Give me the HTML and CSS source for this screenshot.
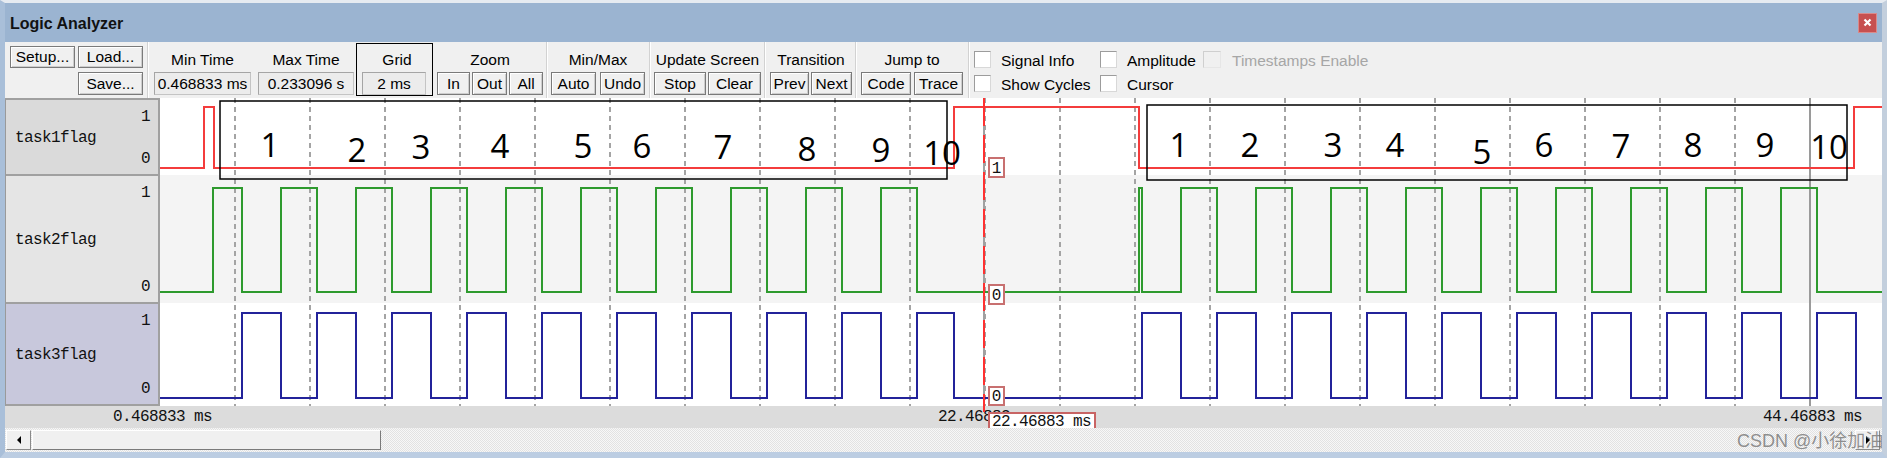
FILE: index.html
```html
<!DOCTYPE html>
<html>
<head>
<meta charset="utf-8">
<title>Logic Analyzer</title>
<link rel="stylesheet" href="styles.css">
</head>
<body>
<div class="window">
  <div class="titlebar">
    <div class="title">Logic Analyzer</div>
    <div class="close"><svg width="9" height="9" viewBox="0 0 9 9"><path class="xmark" d="M1.5 1.5L7.5 7.5M7.5 1.5L1.5 7.5"/></svg></div>
  </div>

  <div class="toolbar">
    <div class="files">
      <div class="r1"><div class="btn w65 h22">Setup...</div><div class="btn w65 h22">Load...</div></div>
      <div class="r2"><div class="btn w65">Save...</div></div>
    </div>
    <div class="sep ml4"></div>
    <div class="grp ml5"><div class="lbl">Min Time</div><div class="ctrls"><div class="field w97">0.468833 ms</div></div></div>
    <div class="grp ml7"><div class="lbl">Max Time</div><div class="ctrls"><div class="field w96">0.233096 s</div></div></div>
    <div class="gridbox ml2"><div class="lbl">Grid</div><div class="ctrls"><div class="field w64">2 ms</div></div></div>
    <div class="grp ml4"><div class="lbl">Zoom</div><div class="ctrls g2"><div class="btn w33">In</div><div class="btn w35">Out</div><div class="btn w34">All</div></div></div>
    <div class="sep ml3"></div>
    <div class="grp ml3"><div class="lbl">Min/Max</div><div class="ctrls g4"><div class="btn w45">Auto</div><div class="btn w45">Undo</div></div></div>
    <div class="sep ml4"></div>
    <div class="grp ml3"><div class="lbl">Update Screen</div><div class="ctrls g2"><div class="btn w52">Stop</div><div class="btn w53">Clear</div></div></div>
    <div class="sep ml3"></div>
    <div class="grp ml4"><div class="lbl">Transition</div><div class="ctrls g2"><div class="btn w39">Prev</div><div class="btn w41">Next</div></div></div>
    <div class="sep ml3"></div>
    <div class="grp ml4"><div class="lbl">Jump to</div><div class="ctrls g3"><div class="btn w50">Code</div><div class="btn w49">Trace</div></div></div>
    <div class="sep ml5"></div>
    <div class="checks ml4">
      <div class="cb"></div><div class="ct">Signal Info</div>
      <div class="cb"></div><div class="ct">Amplitude</div>
      <div class="cb dis"></div><div class="ct ct3 distext">Timestamps Enable</div>
      <div class="cb"></div><div class="ct">Show Cycles</div>
      <div class="cb"></div><div class="ct">Cursor</div>
    </div>
  </div>

  <div class="main">
    <div class="names">
      <div class="sig s1"><div class="v">1</div><div class="nm">task1flag</div><div class="v">0</div></div>
      <div class="sig s2"><div class="v">1</div><div class="nm">task2flag</div><div class="v">0</div></div>
      <div class="sig s3"><div class="v">1</div><div class="nm">task3flag</div><div class="v">0</div></div>
    </div>
    <div class="plot">
      <svg class="wave" width="1722" height="308" viewBox="160 98 1722 308">
        <rect class="row-w" x="160" y="98" width="1722" height="77"/>
        <rect class="row-g" x="160" y="175" width="1722" height="128"/>
        <rect class="row-w" x="160" y="303" width="1722" height="103"/>
        <path class="grid" d="M235 98V406M310 98V406M385 98V406M460 98V406M535 98V406M610 98V406M685 98V406M760 98V406M835 98V406M910 98V406M985 98V406M1060 98V406M1135 98V406M1210 98V406M1285 98V406M1360 98V406M1435 98V406M1510 98V406M1585 98V406M1660 98V406M1735 98V406"/>
        <path class="endline" d="M1810 98V406"/>
        <path class="sig-red" d="M160 168H204V107H214V168H954V107H1139V168H1854V107H1882"/>
        <path class="sig-green" d="M160 292H213V188H242V292H281V188H317V292H356V188H392V292H431V188H467V292H506V188H542V292H581V188H617V292H656V188H692V292H731V188H767V292H806V188H842V292H881V188H917V292H1139V188H1142V292H1181V188H1217V292H1256V188H1292V292H1331V188H1367V292H1406V188H1442V292H1481V188H1517V292H1556V188H1592V292H1631V188H1667V292H1706V188H1742V292H1781V188H1817V292H1882"/>
        <path class="sig-blue" d="M160 398H242V313H281V398H317V313H356V398H392V313H431V398H467V313H506V398H542V313H581V398H617V313H656V398H692V313H731V398H767V313H806V398H842V313H881V398H917V313H954V398H1142V313H1181V398H1217V313H1256V398H1292V313H1331V398H1367V313H1406V398H1442V313H1481V398H1517V313H1556V398H1592V313H1631V398H1667V313H1706V398H1742V313H1781V398H1817V313H1856V398H1882"/>
        <rect class="anno" x="220" y="101" width="727" height="78"/>
        <rect class="anno" x="1147" y="105" width="700" height="75"/>
        <text class="dg" x="270" y="157">1</text>
        <text class="dg" x="357" y="162">2</text>
        <text class="dg" x="421" y="159">3</text>
        <text class="dg" x="500" y="158">4</text>
        <text class="dg" x="583" y="158">5</text>
        <text class="dg" x="642" y="158">6</text>
        <text class="dg" x="723" y="159">7</text>
        <text class="dg" x="807" y="161">8</text>
        <text class="dg" x="881" y="162">9</text>
        <text class="dg" x="942" y="165">10</text>
        <text class="dg" x="1179" y="157">1</text>
        <text class="dg" x="1250" y="157">2</text>
        <text class="dg" x="1333" y="157">3</text>
        <text class="dg" x="1395" y="157">4</text>
        <text class="dg" x="1482" y="164">5</text>
        <text class="dg" x="1544" y="157">6</text>
        <text class="dg" x="1621" y="158">7</text>
        <text class="dg" x="1693" y="157">8</text>
        <text class="dg" x="1765" y="157">9</text>
        <text class="dg" x="1829" y="159">10</text>
        <path class="cur-base" d="M984 98V406"/>
        <path class="cur" d="M984 98V406"/>
        <rect class="cvbox" x="989" y="158" width="15" height="19"/>
        <text class="cv" x="996.5" y="173">1</text>
        <rect class="cvbox" x="989" y="285" width="15" height="19"/>
        <text class="cv" x="996.5" y="300">0</text>
        <rect class="cvbox" x="989" y="387" width="15" height="18"/>
        <text class="cv" x="996.5" y="401">0</text>
      </svg>
    </div>
  </div>

  <div class="axis">
    <div class="tl t0">0.468833 ms</div>
    <div class="tl t1">22.46883 ms</div>
    <div class="tl t2">44.46883 ms</div>
    <div class="curline"></div>
    <div class="curlbl">22.46883 ms</div>
  </div>

  <div class="scroll">
    <div class="sbtn"><div class="tri-l"></div></div>
    <div class="thumb"></div>
    <div class="track"></div>
    <div class="sbtn"><div class="tri-r"></div></div>
    <div class="wm">CSDN @小徐加油</div>
  </div>
</div>
</body>
</html>
```

FILE: styles.css
```css
body {
  margin: 0;
  background: #ffffff;
}

.window {
  width: 1887px;
  height: 458px;
  box-sizing: border-box;
  border-top: 3px solid #e6ebf1;
  border-left: 5px solid #a9bfd9;
  border-right: 5px solid #c3cfdd;
  border-bottom: 6px solid #bccde2;
  display: flex;
  flex-direction: column;
  font-family: "Liberation Sans", Arial, sans-serif;
  color: #000;
  overflow: hidden;
}

/* Title bar */
.titlebar {
  height: 39px;
  flex-shrink: 0;
  background: #9bb4d1;
  display: flex;
  align-items: center;
  justify-content: space-between;
  padding: 0 5px;
}
.title {
  font-weight: bold;
  font-size: 16px;
  color: #111;
  padding-top: 2px;
}
.close {
  width: 19px;
  height: 20px;
  box-sizing: border-box;
  background: #c75050;
  border: 1px solid #d98a8a;
  display: flex;
  align-items: center;
  justify-content: center;
}
.close svg { display: block; }
.xmark {
  stroke: #fff;
  stroke-width: 2.2;
  fill: none;
}

/* Toolbar */
.toolbar {
  height: 56px;
  flex-shrink: 0;
  background: #f0f0f0;
  display: flex;
  align-items: flex-start;
  padding-left: 5px;
  font-size: 15.5px;
}
.files {
  width: 133px;
  display: flex;
  flex-direction: column;
}
.files .r1 {
  display: flex;
  gap: 3px;
  margin-top: 4px;
}
.files .r2 {
  display: flex;
  justify-content: flex-end;
  margin-top: 4px;
}
.sep {
  width: 2px;
  height: 56px;
  box-sizing: border-box;
  border-left: 1px solid #d2d2d2;
  border-right: 1px solid #ffffff;
}
.grp {
  display: flex;
  flex-direction: column;
  padding-top: 8px;
}
.lbl {
  height: 20px;
  line-height: 20px;
  text-align: center;
  white-space: nowrap;
}
.ctrls {
  display: flex;
  margin-top: 2px;
}
.g2 { gap: 2px; }
.g3 { gap: 3px; }
.g4 { gap: 4px; }
.ml2 { margin-left: 2px; }
.ml3 { margin-left: 3px; }
.ml4 { margin-left: 4px; }
.ml5 { margin-left: 5px; }
.ml7 { margin-left: 7px; }

.btn {
  height: 23px;
  box-sizing: border-box;
  border: 1px solid #7a7a7a;
  box-shadow: inset 1px 1px 0 #ffffff, inset -1px -1px 0 #cdcdcd;
  background: #f0f0f0;
  text-align: center;
  line-height: 21px;
  white-space: nowrap;
  overflow: hidden;
}
.btn.h22 { height: 22px; line-height: 20px; }
.field {
  height: 23px;
  box-sizing: border-box;
  border: 1px solid #c4c4c4;
  border-top-color: #a5a5a5;
  border-left-color: #a5a5a5;
  background: #ececec;
  text-align: center;
  line-height: 21px;
  white-space: nowrap;
}
.w33 { width: 33px; }
.w34 { width: 34px; }
.w35 { width: 35px; }
.w39 { width: 39px; }
.w41 { width: 41px; }
.w45 { width: 45px; }
.w49 { width: 49px; }
.w50 { width: 50px; }
.w52 { width: 52px; }
.w53 { width: 53px; }
.w64 { width: 64px; }
.w65 { width: 65px; }
.w96 { width: 96px; }
.w97 { width: 97px; }

.gridbox {
  margin-top: 1px;
  width: 77px;
  height: 53px;
  box-sizing: border-box;
  border: 1px solid #000;
  padding: 6px 0 0 5px;
}

.checks {
  display: grid;
  grid-template-columns: 17px 109px 17px 86px 18px auto;
  grid-auto-rows: 17px;
  row-gap: 7px;
  margin-top: 9px;
  align-items: center;
}
.cb {
  width: 17px;
  height: 17px;
  box-sizing: border-box;
  background: #ffffff;
  border: 1px solid #9c9c9c;
  border-right-color: #d8d8d8;
  border-bottom-color: #d8d8d8;
}
.cb.dis {
  width: 18px;
  background: #f0f0f0;
  border-color: #cfcfcf #e6e6e6 #e6e6e6 #cfcfcf;
}
.ct {
  padding-left: 10px;
  white-space: nowrap;
  line-height: 20px;
  margin-top: 2px;
}
.ct3 { padding-left: 11px; }
.distext { color: #a6a6a6; }

/* Main signal area */
.main {
  height: 308px;
  flex-shrink: 0;
  display: flex;
}
.names {
  width: 155px;
  flex-shrink: 0;
  box-sizing: border-box;
  border-left: 1px solid #9a9a9a;
  border-top: 2px solid #a0a0a0;
  border-right: 2px solid #a0a0a0;
  display: flex;
  flex-direction: column;
  font-family: "Liberation Mono", "DejaVu Sans Mono", monospace;
  font-size: 16px;
  letter-spacing: -0.6px;
  color: #111;
}
.sig {
  display: flex;
  flex-direction: column;
  box-sizing: border-box;
  border-bottom: 2px solid #a0a0a0;
  padding: 9px 8px 7px 9px;
}
.s1 { height: 76px; background: #dadada; }
.s2 { height: 128px; background: #e5e5e5; }
.s3 { height: 102px; background: #c8c8dc; }
.v {
  text-align: right;
  line-height: 16px;
}
.nm {
  flex: 1;
  display: flex;
  align-items: center;
}
.plot {
  flex: 1;
  position: relative;
  overflow: hidden;
}
.wave { display: block; }
.row-w { fill: #ffffff; }
.row-g { fill: #f4f4f4; }
.grid {
  stroke: #a4a4a4;
  stroke-width: 2;
  stroke-dasharray: 5 4;
  fill: none;
}
.endline {
  stroke: #9a9a9a;
  stroke-width: 2;
  fill: none;
}
.sig-red, .sig-green, .sig-blue {
  fill: none;
  stroke-width: 2;
}
.sig-red { stroke: #f43c3c; }
.sig-green { stroke: #2e9a2e; }
.sig-blue { stroke: #23239a; }
.anno {
  fill: none;
  stroke: #000;
  stroke-width: 1.5;
}
.dg {
  font-family: "Open Sans", "Liberation Sans", sans-serif;
  font-size: 33px;
  fill: #000;
  text-anchor: middle;
}
.cur-base {
  stroke: #a0a0a0;
  stroke-width: 2;
  fill: none;
}
.cur {
  stroke: #ff3030;
  stroke-width: 2;
  stroke-dasharray: 28 9;
  fill: none;
}
.cvbox {
  fill: #ffffff;
  stroke: #c87070;
  stroke-width: 2;
}
.cv {
  font-family: "Liberation Mono", monospace;
  font-size: 16px;
  fill: #111;
  text-anchor: middle;
}

/* Time axis */
.axis {
  height: 22px;
  flex-shrink: 0;
  background: #dcdcdc;
  position: relative;
  font-family: "Liberation Mono", "DejaVu Sans Mono", monospace;
  font-size: 16px;
  letter-spacing: -0.6px;
  color: #111;
}
.tl {
  position: absolute;
  top: 0;
  line-height: 22px;
  white-space: nowrap;
}
.t0 { left: 108px; }
.t1 { left: 933px; }
.t2 { left: 1758px; }
.curline {
  position: absolute;
  left: 978px;
  top: 0;
  width: 2px;
  height: 6px;
  background: #ff3030;
}
.curlbl {
  position: absolute;
  left: 983px;
  top: 6px;
  height: 16px;
  line-height: 16px;
  padding: 0 3px 0 2px;
  border: 2px solid #c86464;
  border-bottom: none;
  background: #ffffff;
  white-space: nowrap;
}

/* Scrollbar */
.scroll {
  height: 24px;
  flex-shrink: 0;
  display: flex;
  align-items: center;
  padding: 0 2px 0 1px;
  background: repeating-conic-gradient(#e2e2e2 0 25%, #f7f7f7 0 50%) 0 0 / 2px 2px;
  position: relative;
}
.sbtn {
  width: 25px;
  height: 20px;
  box-sizing: border-box;
  background: #f0f0f0;
  border: 1px solid;
  border-color: #ffffff #8a8a8a #8a8a8a #ffffff;
  display: flex;
  align-items: center;
  justify-content: center;
  flex-shrink: 0;
}
.tri-l {
  width: 0;
  height: 0;
  border-top: 4px solid transparent;
  border-bottom: 4px solid transparent;
  border-right: 4px solid #000;
}
.tri-r {
  width: 0;
  height: 0;
  border-top: 4px solid transparent;
  border-bottom: 4px solid transparent;
  border-left: 4px solid #000;
}
.thumb {
  width: 349px;
  height: 20px;
  margin-left: 1px;
  box-sizing: border-box;
  background: #f0f0f0;
  border: 1px solid;
  border-color: #ffffff #7a7a7a #7a7a7a #ffffff;
  flex-shrink: 0;
}
.track { flex: 1; }
.wm {
  position: absolute;
  left: 1732px;
  top: 2px;
  line-height: 22px;
  font-family: "Liberation Sans", "Noto Sans CJK SC", sans-serif;
  font-size: 18px;
  color: rgba(105, 105, 105, 0.72);
  white-space: nowrap;
}
```
